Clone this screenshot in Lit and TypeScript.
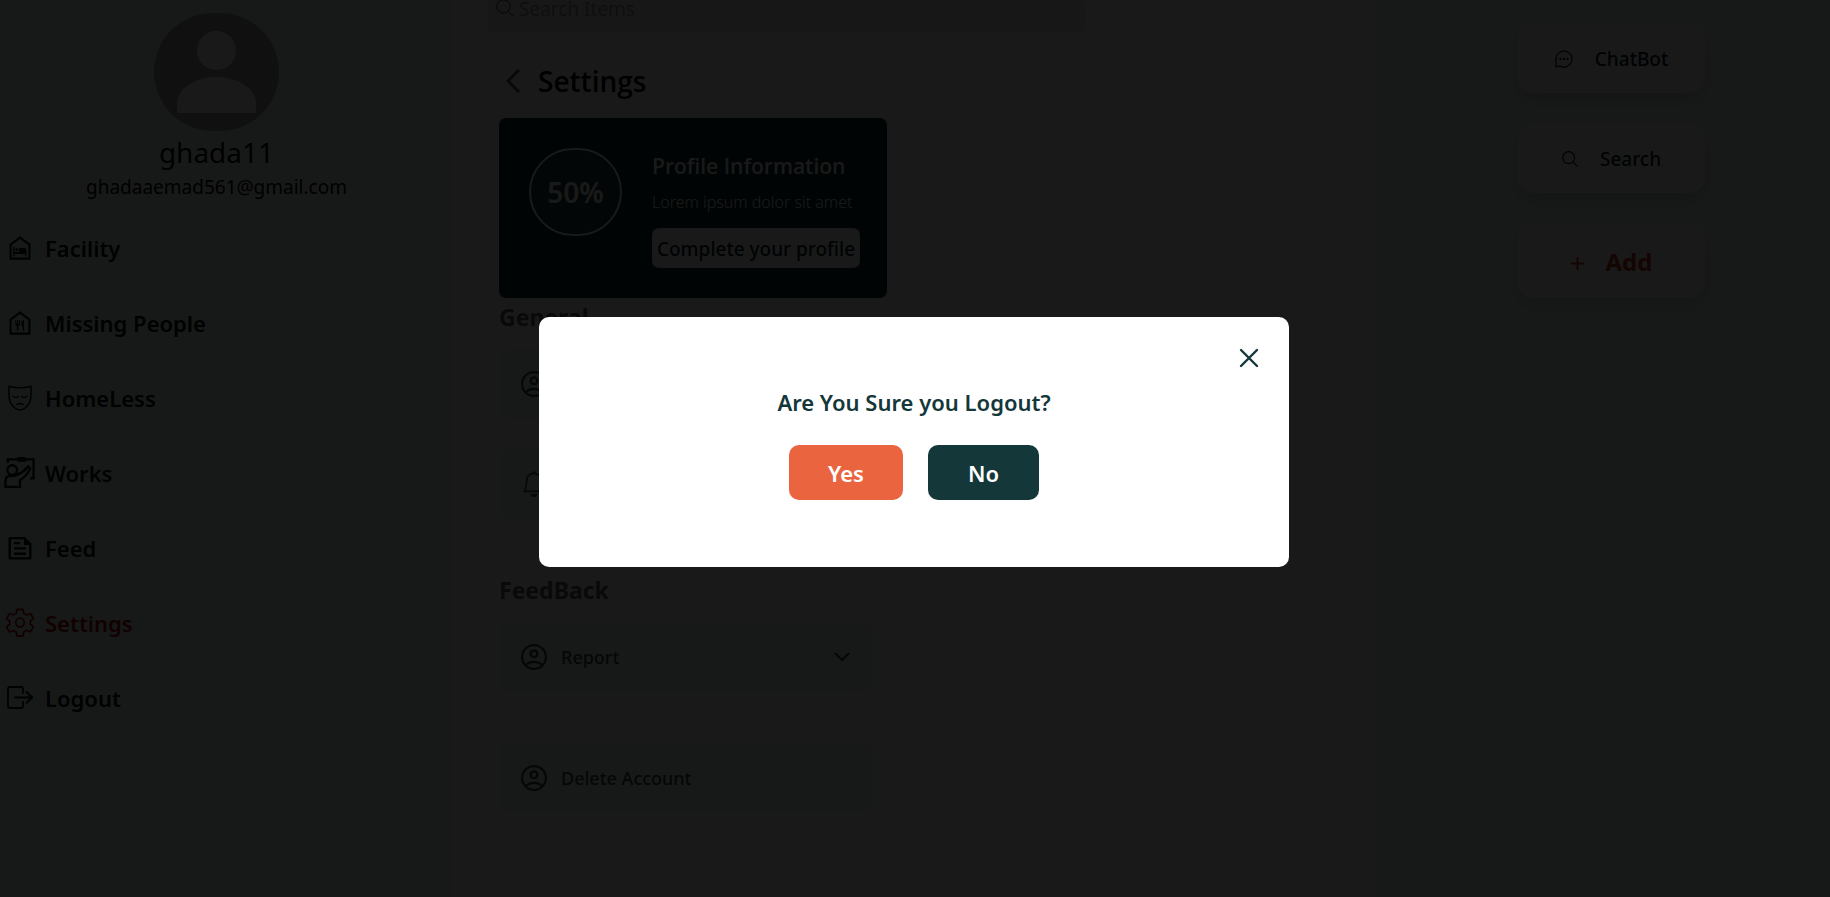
import { LitElement, html, css } from "lit";
import { customElement } from "lit/decorators.js";

const nav = [
  { label: "Facility", icon: html`<svg class="ico" viewBox="1.700 1.700 20.600 20.600"><path d="M12 2 3 8.500V22h18V8.500zm7.200 18.200H4.800V9.400L12 4.200l7.200 5.200z"/><path d="M6.200 11h1.100v4.500h3.900V12h4.300a2 2 0 0 1 2 2v5h-1.100v-1.900H7.300V19H6.200z"/><circle cx="9.200" cy="13.500" r="1.200"/></svg>` },
  { label: "Missing People", icon: html`<svg class="ico" viewBox="1.700 1.700 20.600 20.600"><path d="M12 2 3 8.500V22h18V8.500zm7.200 18.200H4.800V9.400L12 4.200l7.200 5.200z"/><path d="M8 9.500h.8v3h.7v-3h.9v3h.7v-3h.8v3.500q0 1-1.200 1.300v4.200H9.200v-4.200Q8 14 8 13zM15.500 9.500v9h-1.300v-4h-1v-3q.3-1.600 2.300-2z"/></svg>` },
  { label: "HomeLess", icon: html`<svg class="ico mask line" viewBox="0 0 24 26"><path d="M1 1.200q11 3.200 22 0V11c0 7-5.500 14-11 14S1 18 1 11zM5 11.500q2.700 2 5.400 0m3.200 0q2.700 2 5.400 0M8.800 19.500q3.200-2.200 6.400 0"/></svg>` },
  { label: "Works", icon: html`<svg class="ico big" viewBox="0 0 32 32"><path fill="none" stroke="currentColor" stroke-width="2.400" d="M4 6V2.500h26.500V22H27M1.500 30.800V24.500q0-5 5-5 9 1 18.500-10l2 2.500q-3 7-10.500 12v6.800zM13.500 13.500a5 5 0 1 1-10 0 5 5 0 1 1 10 0M13 18q7-2 12-8"/><path d="M14 0h8v5h-8z"/></svg>` },
  { label: "Feed", icon: html`<svg class="ico" viewBox="0 0 24 24"><path fill-rule="evenodd" d="M2 1h15l6.500 6.500V22q0 1.500-1.500 1.500H2Q.5 23.500.5 22V2.500Q.5 1 2 1zm1 2.300v17.900h18V9h-5V3.300zM6 6h6v2.300H6zm0 5.300h12v2.300H6zm0 5.300h12v2.300H6z"/></svg>` },
  { label: "Settings", active: true, icon: html`<svg class="ico gear line" viewBox="0 0 28 28"><circle cx="14" cy="14" r="4.300"/><path d="M11 1h6l.8 4q1.500.6 2.700 1.500l4-1.500 3 5-3.200 2.800v2.800l3.200 2.800-3 5-4-1.500q-1.200 1-2.700 1.500L17 27.500h-6l-.8-4q-1.500-.6-2.700-1.500l-4 1.500-3-5 3.200-2.800v-2.800L.6 10l3-5 4 1.500Q9 5.500 10.200 5z"/></svg>` },
  { label: "Logout", icon: html`<svg class="ico exit line" viewBox="0 0 28 24"><path d="M17 7V3q0-2-2-2H4Q2 1 2 3v17q0 2 2 2h11q2 0 2-2v-4M9 11.500h17M20.500 6l5.700 5.500-5.700 5.500"/></svg>` },
];

const person = html`<svg class="ico row-ico" viewBox="2 2 20 20"><path fill-rule="evenodd" d="M12 2a10 10 0 1 0 0 20 10 10 0 1 0 0-20m0 1.700a8.300 8.300 0 1 1 0 16.600 8.300 8.300 0 1 1 0-16.600"/><path fill-rule="evenodd" d="M12 6a3.500 3.500 0 1 0 0 7 3.500 3.500 0 1 0 0-7m0 1.800a1.700 1.700 0 1 1 0 3.400 1.700 1.700 0 1 1 0-3.400M5 17.500q3-2.600 7-2.600t7 2.600l-1.200 1.200q-2.500-2-5.800-2t-5.800 2z"/></svg>`;
const bell = html`<svg class="ico row-ico" viewBox="0 0 16 16"><path d="M8 16a2 2 0 0 0 2-2H6a2 2 0 0 0 2 2M8 1.900l-.8.200A4 4 0 0 0 4 6c0 .600-.100 2.200-.500 3.700-.200.800-.400 1.600-.700 2.300h10.400c-.300-.700-.500-1.500-.700-2.300C12.100 8.200 12 6.600 12 6a4 4 0 0 0-3.200-3.900zM14.200 12c.200.400.500.800.800 1H1c.300-.200.600-.600.800-1C2.700 10.200 3 6.900 3 6c0-2.400 1.700-4.400 4-4.900a1 1 0 1 1 2 0A5 5 0 0 1 13 6c0 .900.300 4.200 1.200 6"/></svg>`;
const chevron = html`<svg class="chev" viewBox="0 0 18 12"><path d="M2 2l7 7 7-7"/></svg>`;
const lens = (c: string) => html`<svg class=${c} viewBox="0 0 18 18"><circle cx="7.500" cy="7.500" r="6.700"/><path d="m12.300 12.300 5 5"/></svg>`;

@customElement("app-root")
export class AppRoot extends LitElement {
  static styles = css`
    :host { display: block; font-family: "Segoe UI", "Noto Sans", "Open Sans", sans-serif; color: #000; }
    * { box-sizing: border-box; margin: 0; }
    button { font: inherit; border: 0; color: inherit; background: none; padding: 0; }
    .page { display: grid; grid-template-columns: 450fr 925fr 455fr; height: 100vh; overflow: hidden; background: #fff; }
    .side { background: #ebfaf4; display: flex; flex-direction: column; padding-top: 13px; }
    .who { display: flex; flex-direction: column; align-items: center; width: 433px; max-width: 100%; }
    .avatar { width: 125px; height: 118px; display: block; }
    .name { font-size: 28px; line-height: 42px; }
    .mail { font-size: 19px; line-height: 28px; }
    .nav { list-style: none; padding: 0; margin-top: 9px; }
    .link { display: flex; align-items: center; gap: 10px; height: 75px; padding-left: 4px; color: #00100f; text-decoration: none; font-family: "Segoe UI", "Noto Sans", sans-serif; font-size: 22px; font-weight: 600; }
    .link.active { color: #a81010; }
    .slot { width: 31px; display: flex; justify-content: center; }
    .ico { width: 24px; height: 24px; fill: currentColor; flex: none; }
    .big { width: 31px; height: 31px; }
    .line { fill: none; stroke: currentColor; stroke-width: 1.500; stroke-linecap: round; stroke-linejoin: round; }
    .mask { height: 26px; }
    .gear { width: 28px; height: 29px; stroke-width: 1.800; }
    .exit { width: 28px; height: 24px; stroke-width: 1.800; }
    .main { padding: 0 0 0 38px; }
    .search { display: flex; align-items: flex-end; gap: 5px; width: 597px; height: 33px; background: #e9e9e9; border-radius: 3px; padding: 0 8px 10px; color: #555; }
    .lens { width: 18px; height: 18px; margin-bottom: 6px; fill: none; stroke: #333; stroke-width: 1; overflow: visible; }
    .search input { border: 0; background: none; font: 19px/28px "Segoe UI", "Noto Sans", sans-serif; padding: 0; flex: 1; outline: 0; }
    .search input::placeholder { color: #999; opacity: 1; }
    .content { padding: 27px 0 0 11px; }
    .title { display: flex; align-items: center; gap: 18px; height: 42px; padding-left: 7px; }
    .title h1 { font-family: "Segoe UI", "Open Sans", sans-serif; font-size: 28px; font-weight: 600; }
    .back { width: 14px; height: 24px; fill: none; stroke: #406060; stroke-width: 3; display: block; }
    .card { display: flex; align-items: flex-start; gap: 30px; width: 388px; height: 180px; margin-top: 16px; padding: 30px 27px 30px 30px; background: #003030; border-radius: 7px; color: #fff; }
    .ring { flex: none; display: grid; place-items: center; width: 93px; height: 88px; border: 2px solid #fff; border-radius: 46px; background: #204040; font-size: 28px; font-weight: 600; }
    .info { flex: 1; white-space: nowrap; }
    .info h2 { font-family: "Segoe UI", "Open Sans", sans-serif; font-size: 21px; line-height: 36px; font-weight: 600; }
    .info p { font-size: 16px; line-height: 36px; font-weight: 300; margin-bottom: 8px; }
    .complete { width: 208px; height: 40px; padding-top: 2px; background: #fff; color: #00201f; border-radius: 7px; font-size: 19px; font-weight: 500; }
    .h { font-size: 23px; line-height: 38px; font-weight: 700; color: #606060; }
    .row { display: flex; align-items: center; width: 374px; height: 70px; padding: 0 22px; gap: 14px; background: #ebfaf4; border-radius: 10px; font-size: 18px; font-weight: 500; color: #304848; text-align: left; }
    .row-ico { width: 26px; height: 26px; }
    .row span { flex: 1; }
    .chev { width: 18px; height: 12px; fill: none; stroke: currentColor; stroke-width: 2; }
    .rows { display: grid; gap: 30px; margin: 13px 0 52px; }
    .rows.wide { gap: 51px; }
    .right { background: #ebfaf4; display: flex; flex-direction: column; align-items: flex-start; gap: 30px; padding: 23px 0 0 143px; }
    .tool { display: flex; align-items: center; justify-content: center; gap: 22px; width: 187px; height: 70px; padding-top: 2px; background: #fff; border-radius: 16px; box-shadow: 0 8px 16px rgba(0,0,0,.15); font-size: 19px; font-weight: 500; color: #00201f; }
    .t-ico { width: 18px; height: 18px; fill: none; stroke: currentColor; stroke-width: 1.200; }
    .t-lens { width: 16px; height: 16px; fill: none; stroke: currentColor; stroke-width: 1.400; }
    .add { height: 75px; color: #c03818; font-size: 24px; font-weight: 700; }
    .plus { width: 13px; height: 13px; margin-top: 4px; stroke: currentColor; stroke-width: 2; }
    .overlay { position: fixed; inset: 0; display: flex; align-items: center; justify-content: center; padding: 0 2px 13px 0; background: rgba(0,0,0,.9); }
    .dialog { width: 750px; max-width: 94%; height: 250px; background: #fff; border-radius: 10px; padding: 29px 28px; display: flex; flex-direction: column; align-items: center; color: #14373a; }
    .close { align-self: flex-end; width: 24px; height: 24px; }
    .close svg { display: block; width: 24px; height: 24px; stroke: #14373a; stroke-width: 2.400; stroke-linecap: round; }
    .ask { font-size: 22px; line-height: 30px; font-weight: 600; margin-top: 17px; }
    .acts { display: flex; gap: 25px; margin-top: 28px; }
    .yes, .no { height: 55px; width: 114px; border-radius: 10px; color: #fff; font-size: 22px; font-weight: 600; background: #eb6440; }
    .no { width: 111px; background: #14373a; }
  `;

  render() {
    return html`
      <div class="page">
        <aside class="side">
          <div class="who">
            <svg class="avatar" viewBox="0 0 125 118"><rect width="125" height="118" rx="59" fill="#a0a0a0"/><circle cx="62.500" cy="37.500" r="19.500" fill="#fff"/><path fill="#fff" d="M23 100V90c0-14 18-26 39.500-26S102 76 102 90v10z"/></svg>
            <div class="name">ghada11</div>
            <div class="mail">ghadaaemad561@gmail.com</div>
          </div>
          <nav><ul class="nav">${nav.map((n) => html`<li><a href="#" class="link ${n.active ? "active" : ""}"><span class="slot">${n.icon}</span>${n.label}</a></li>`)}</ul></nav>
        </aside>
        <main class="main">
          <label class="search">${lens("lens")}<input type="search" aria-label="Search Items" placeholder="Search Items"></label>
          <div class="content">
            <div class="title">
              <button aria-label="Back"><svg class="back" viewBox="0 0 14 24"><path d="M13 1 2 12l11 11"/></svg></button>
              <h1>Settings</h1>
            </div>
            <section class="card">
              <div class="ring">50%</div>
              <div class="info">
                <h2>Profile Information</h2>
                <p>Lorem ipsum dolor sit amet</p>
                <button class="complete">Complete your profile</button>
              </div>
            </section>
            <h2 class="h">General</h2>
            <div class="rows">
              <button class="row">${person}<span>Account</span>${chevron}</button>
              <button class="row">${bell}<span>Notifications</span>${chevron}</button>
            </div>
            <h2 class="h">FeedBack</h2>
            <div class="rows wide">
              <button class="row">${person}<span>Report</span>${chevron}</button>
              <button class="row">${person}<span>Delete Account</span></button>
            </div>
          </div>
        </main>
        <aside class="right">
          <button class="tool"><svg class="t-ico" viewBox="0 0 18 18"><path d="M1 17V9a8 8 0 1 1 4 7z"/><path stroke-width="2" d="M4.500 9h2m1.500 0h2m1.500 0h2"/></svg>ChatBot</button>
          <button class="tool">${lens("t-lens")}Search</button>
          <button class="tool add"><svg class="plus" viewBox="0 0 13 13"><path d="M6.500 0v13M0 6.500h13"/></svg>Add</button>
        </aside>
      </div>
      <div class="overlay">
        <div class="dialog" role="dialog" aria-modal="true" aria-labelledby="ask">
          <button class="close" aria-label="Close"><svg viewBox="0 0 24 24"><path d="M4 4l16 16M20 4 4 20"/></svg></button>
          <h2 class="ask" id="ask">Are You Sure you Logout?</h2>
          <div class="acts"><button class="yes">Yes</button><button class="no">No</button></div>
        </div>
      </div>`;
  }
}
